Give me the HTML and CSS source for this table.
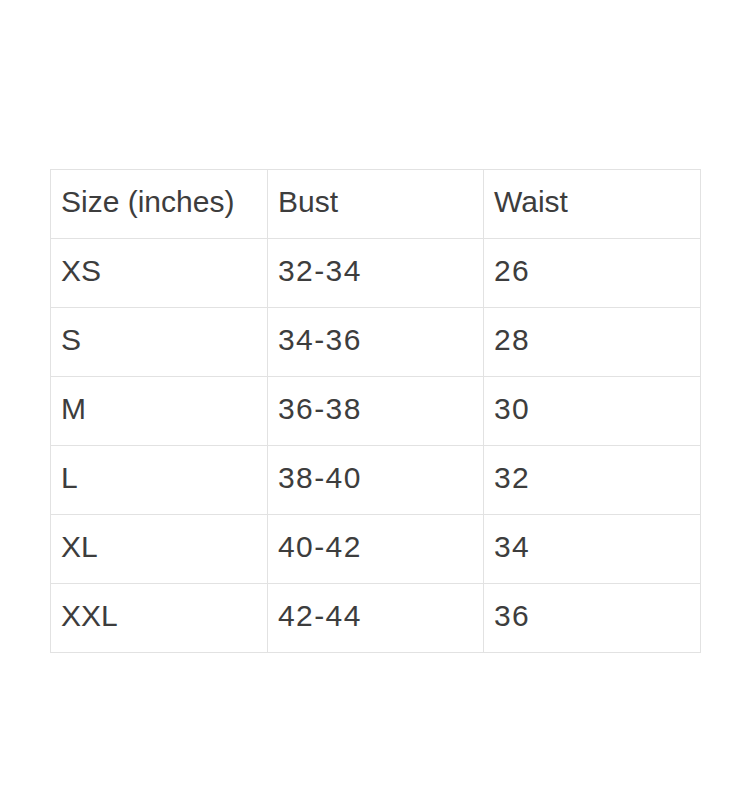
FILE: index.html
```html
<!DOCTYPE html>
<html>
<head>
<meta charset="utf-8">
<link rel="stylesheet" href="styles.css">
</head>
<body>
<div class="page">
  <table class="size-table">
    <colgroup><col class="c1"><col class="c2"><col class="c3"></colgroup>
    <tr><td>Size (inches)</td><td>Bust</td><td>Waist</td></tr>
    <tr><td>XS</td><td class="num">32-34</td><td class="num">26</td></tr>
    <tr><td>S</td><td class="num">34-36</td><td class="num">28</td></tr>
    <tr><td>M</td><td class="num">36-38</td><td class="num">30</td></tr>
    <tr><td>L</td><td class="num">38-40</td><td class="num">32</td></tr>
    <tr><td>XL</td><td class="num">40-42</td><td class="num">34</td></tr>
    <tr><td>XXL</td><td class="num">42-44</td><td class="num">36</td></tr>
  </table>
</div>
</body>
</html>
```

FILE: styles.css
```css
html, body {
  margin: 0;
  padding: 0;
  background: #ffffff;
}
.page {
  padding: 169px 0 0 50px;
}
.size-table {
  border-collapse: collapse;
  table-layout: fixed;
  width: 650px;
  font-family: "Liberation Sans", Arial, sans-serif;
  font-size: 30px;
  color: #3d3d3d;
}
.c1 { width: 217px; }
.c2 { width: 216px; }
.c3 { width: 217px; }
.size-table td {
  border: 1px solid #e2e2e2;
  height: 69px;
  padding: 0 0 4px 10px;
  box-sizing: border-box;
  vertical-align: middle;
  line-height: 34px;
}
.size-table td.num {
  letter-spacing: 1.4px;
}
```
